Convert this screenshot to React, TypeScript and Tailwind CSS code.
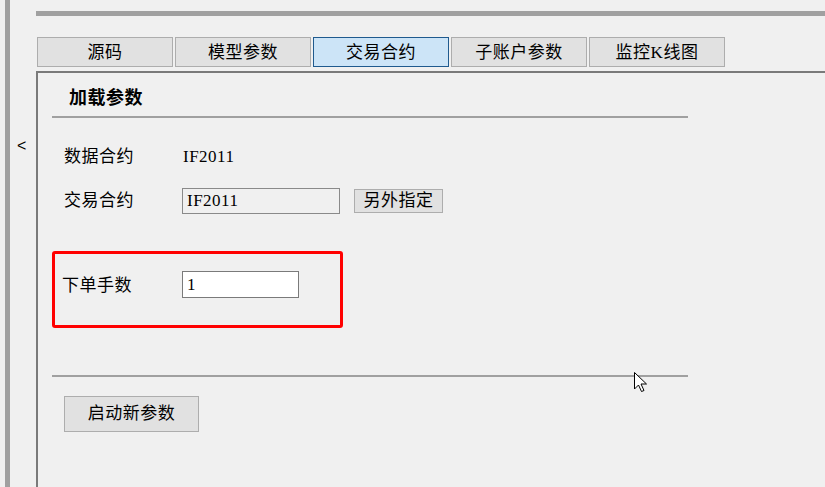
const font = "font-['Liberation_Serif','Noto_Sans_CJK_SC',serif]";

const tabs = ["源码", "模型参数", "交易合约", "子账户参数", "监控K线图"];

export default function App() {
  return (
    <div
      className={`relative flex h-[487px] w-[825px] overflow-hidden bg-[#f0f0f0] text-[17px] tracking-[0.5px] text-black ${font}`}
    >
      <div className="ml-[5px] w-[5px] shrink-0 bg-[#a0a0a0]" />
      <div className="w-[26px] shrink-0 pt-[136px] pl-[7px] font-['Liberation_Sans',sans-serif] text-[16px] leading-[20px] text-black">
        &lt;
      </div>

      <div className="flex min-w-0 flex-1 flex-col">
        <div className="mt-[11px] h-[5px] bg-[#a0a0a0]" />

        <div className="mt-[21px] ml-[1px] flex gap-[2px]">
          {tabs.map((t, i) => (
            <div
              key={t}
              className={`flex h-[30px] w-[136px] items-center justify-center border leading-none ${
                i === 2 ? "border-[#1f5a8e] bg-[#cce4f7]" : "border-[#adadad] bg-[#e1e1e1]"
              }`}
            >
              {t}
            </div>
          ))}
        </div>

        <div className="mt-[4px] flex flex-1 flex-col border-t-2 border-l-2 border-[#7a7a7a]">
          <div className="ml-[14px] w-[636px] border-b-2 border-[#a0a0a0] pt-[13px] pb-[4px] pl-[17px]">
            <span className="text-[18px] leading-[24px] font-bold">加载参数</span>
          </div>

          <div className="mt-[26px] ml-[26px] flex h-[26px] items-center">
            <span className="w-[119px]">数据合约</span>
            <span>IF2011</span>
          </div>

          <div className="mt-[18px] ml-[26px] flex h-[26px] items-center">
            <span className="w-[118px]">交易合约</span>
            <div className="flex h-[26px] w-[158px] items-center border border-[#8a8a8a] bg-[#f0f0f0] pl-[4px] leading-none">
              IF2011
            </div>
            <button
              type="button"
              className="ml-[14px] flex h-[24px] w-[89px] items-center justify-center border border-[#adadad] bg-[#e1e1e1] leading-none"
            >
              另外指定
            </button>
          </div>

          <div className="mt-[37px] ml-[14px] flex h-[77px] w-[291px] items-start rounded-[3px] border-[3px] border-[#ff0000] pt-[17px] pl-[7px]">
            <span className="mt-[5px] w-[120px] leading-[20px]">下单手数</span>
            <div className="flex h-[27px] w-[117px] items-center border border-[#7a7a7a] bg-white pl-[4px] leading-none">
              1
            </div>
          </div>

          <div className="mt-[47px] ml-[14px] h-[2px] w-[636px] bg-[#a0a0a0]" />

          <button
            type="button"
            className="mt-[19px] ml-[26px] flex h-[36px] w-[135px] items-center justify-center border border-[#adadad] bg-[#e1e1e1] leading-none"
          >
            启动新参数
          </button>
        </div>
      </div>

      <svg
        className="absolute top-[372px] left-[634px]"
        width="14"
        height="21"
        viewBox="0 0 14 21"
      >
        <path
          d="M0.5 0.5 L0.5 17 L4.5 13 L7.5 19.5 L10 18.5 L7 12 L12.5 12 Z"
          fill="#fff"
          stroke="#000"
          strokeWidth="1"
          strokeLinejoin="miter"
        />
      </svg>
    </div>
  );
}
